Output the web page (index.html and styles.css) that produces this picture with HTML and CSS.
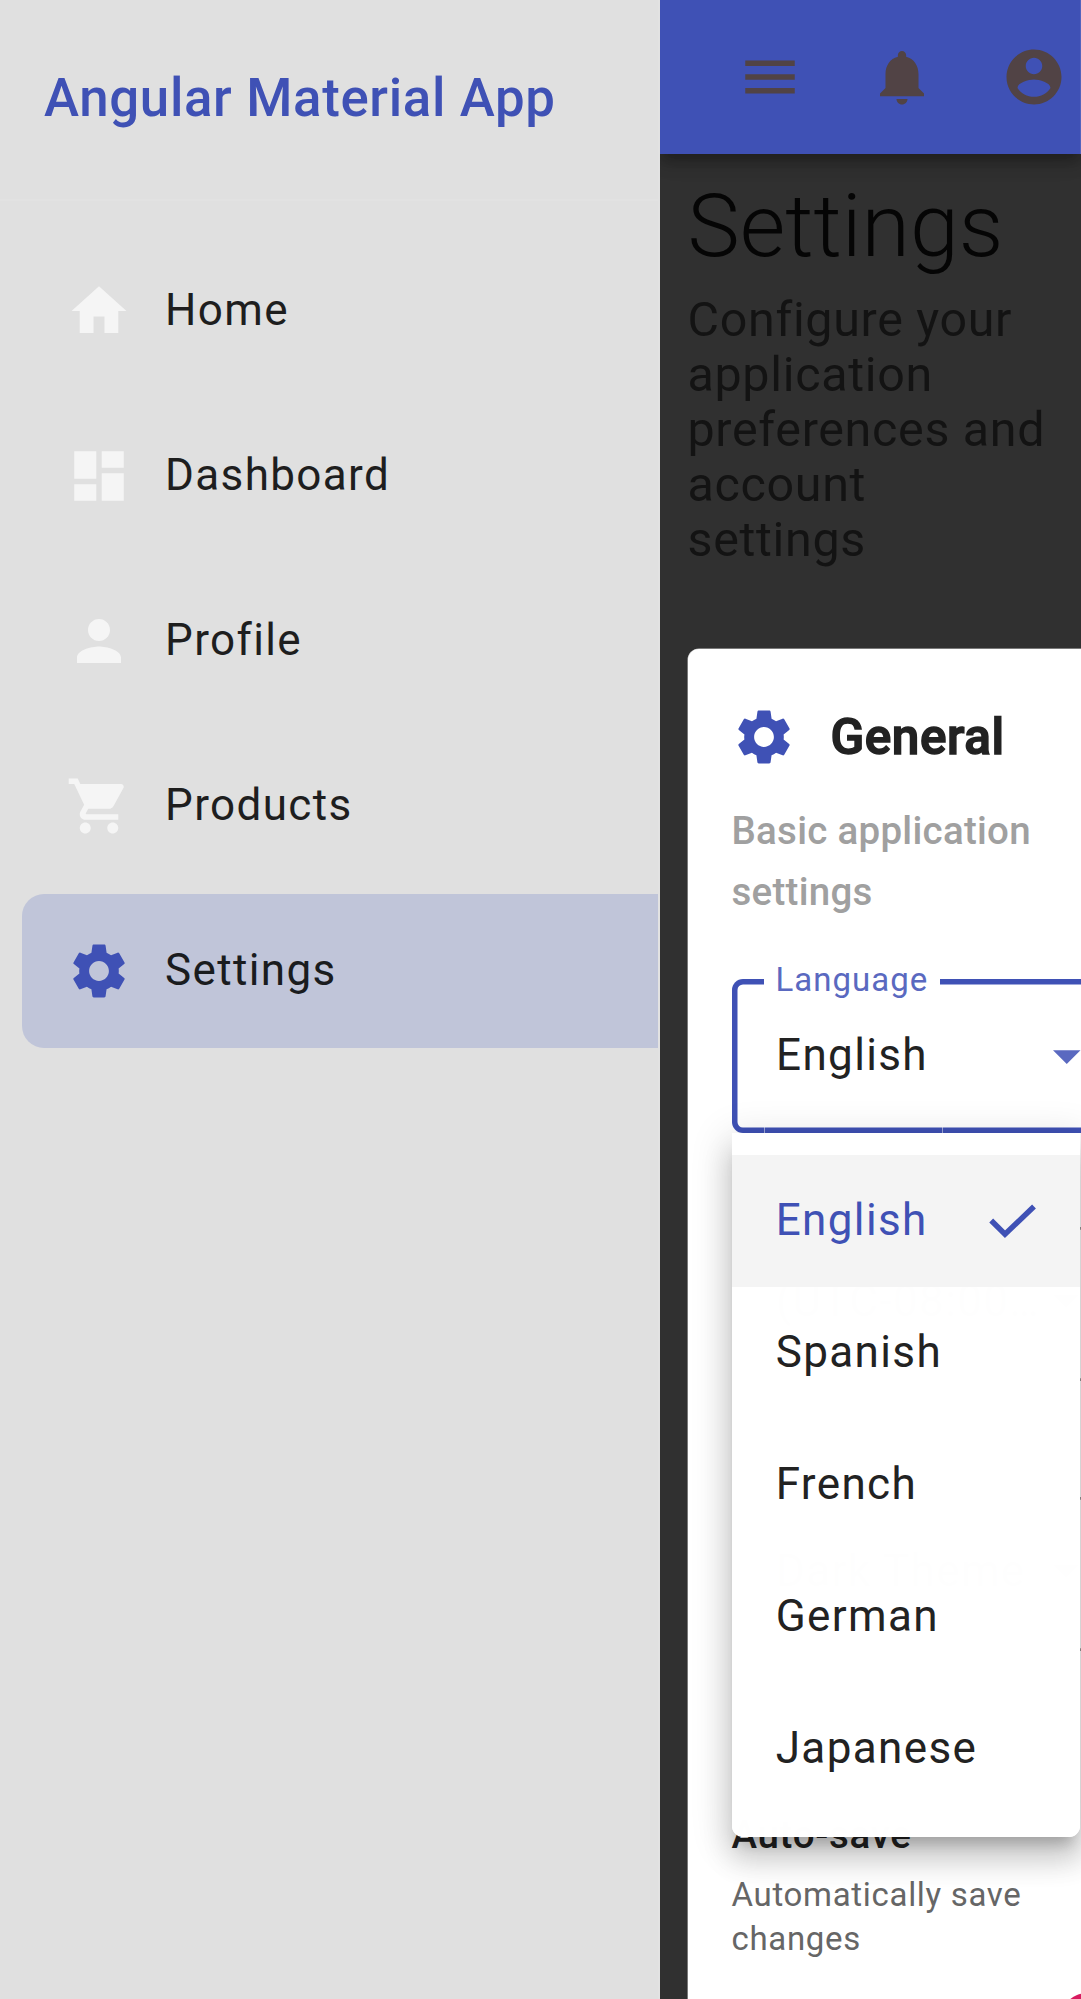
FILE: index.html
```html
<!DOCTYPE html>
<html lang="en">
<head>
<meta charset="utf-8">
<title>Angular Material App</title>
<link rel="stylesheet" href="styles.css">
</head>
<body>
<div class="app">
  <aside class="sidenav">
    <header class="sidenav-header">Angular Material App</header>
    <nav class="nav-list">
      <a class="nav-item"><svg class="icon" viewBox="0 0 24 24"><path d="M10 20v-6h4v6h5v-8h3L12 3 2 12h3v8z"/></svg><span>Home</span></a>
      <a class="nav-item"><svg class="icon" viewBox="0 0 24 24"><path d="M3 13h8V3H3v10zm0 8h8v-6H3v6zm10 0h8V11h-8v10zm0-18v6h8V3h-8z"/></svg><span>Dashboard</span></a>
      <a class="nav-item"><svg class="icon" viewBox="0 0 24 24"><path d="M12 12c2.21 0 4-1.79 4-4s-1.790-4-4-4-4 1.790-4 4 1.790 4 4 4zm0 2c-2.670 0-8 1.340-8 4v2h16v-2c0-2.660-5.330-4-8-4z"/></svg><span>Profile</span></a>
      <a class="nav-item"><svg class="icon" viewBox="0 0 24 24"><path d="M7 18c-1.100 0-1.990.9-1.990 2S5.900 22 7 22s2-.9 2-2-.9-2-2-2zM1 2v2h2l3.600 7.590-1.350 2.450c-.160.280-.250.610-.250.960 0 1.100.9 2 2 2h12v-2H7.420c-.140 0-.250-.110-.250-.250l.030-.120.900-1.630h7.450c.750 0 1.410-.410 1.750-1.030l3.580-6.490c.080-.140.120-.310.120-.480 0-.550-.450-1-1-1H5.210l-.940-2H1zm16 16c-1.100 0-1.990.9-1.990 2s.890 2 1.990 2 2-.9 2-2-.9-2-2-2z"/></svg><span>Products</span></a>
      <a class="nav-item active"><svg class="icon" viewBox="0 0 24 24"><path d="M19.140 12.940c.040-.3.060-.610.060-.940 0-.320-.020-.640-.070-.940l2.030-1.580c.180-.140.230-.410.120-.610l-1.920-3.320c-.120-.220-.370-.290-.590-.220l-2.390.960c-.5-.380-1.030-.7-1.620-.940l-.360-2.540c-.040-.240-.240-.410-.480-.410h-3.840c-.240 0-.430.170-.470.410l-.360 2.540c-.590.240-1.130.570-1.620.940l-2.390-.960c-.220-.080-.470 0-.590.220L2.740 8.870c-.120.210-.080.470.120.610l2.030 1.580c-.050.3-.090.630-.090.940s.020.640.070.940l-2.030 1.580c-.180.140-.230.410-.120.610l1.920 3.320c.120.220.370.290.590.220l2.390-.960c.5.380 1.030.7 1.620.940l.360 2.540c.050.240.240.410.480.410h3.840c.240 0 .440-.170.470-.410l.360-2.540c.590-.240 1.130-.560 1.620-.940l2.390.960c.220.080.470 0 .590-.220l1.920-3.320c.120-.220.070-.470-.120-.610l-2.010-1.580zM12 15.600c-1.980 0-3.600-1.620-3.600-3.600s1.620-3.600 3.600-3.600 3.600 1.620 3.600 3.600-1.620 3.600-3.600 3.600z"/></svg><span>Settings</span></a>
    </nav>
  </aside>

  <div class="main">
    <header class="toolbar">
      <button class="icon-button" aria-label="Menu"><svg class="icon" viewBox="0 0 24 24"><path d="M3 18h18v-2H3v2zm0-5h18v-2H3v2zm0-7v2h18V6H3z"/></svg></button>
      <button class="icon-button" aria-label="Notifications"><svg class="icon" viewBox="0 0 24 24"><path d="M12 22c1.100 0 2-.9 2-2h-4c0 1.100.890 2 2 2zm6-6v-5c0-3.070-1.640-5.640-4.500-6.320V4c0-.830-.670-1.500-1.500-1.500s-1.500.670-1.500 1.500v.680C7.630 5.360 6 7.920 6 11v5l-2 2v1h16v-1l-2-2z"/></svg></button>
      <button class="icon-button" aria-label="Account"><svg class="icon" viewBox="0 0 24 24"><path d="M12 2C6.480 2 2 6.480 2 12s4.480 10 10 10 10-4.480 10-10S17.520 2 12 2zm0 3c1.660 0 3 1.340 3 3s-1.340 3-3 3-3-1.340-3-3 1.340-3 3-3zm0 14.200c-2.500 0-4.710-1.280-6-3.220.030-1.990 4-3.080 6-3.080 1.990 0 5.970 1.090 6 3.080-1.290 1.940-3.500 3.220-6 3.220z"/></svg></button>
    </header>

    <main class="content">
      <h1 class="page-title">Settings</h1>
      <p class="page-subtitle">Configure your<br>application<br>preferences and<br>account<br>settings</p>

      <section class="card">
        <div class="card-header">
          <svg class="icon" viewBox="0 0 24 24"><path d="M19.140 12.940c.040-.3.060-.610.060-.940 0-.320-.020-.640-.070-.940l2.030-1.580c.180-.140.230-.410.120-.610l-1.920-3.320c-.120-.220-.370-.290-.590-.220l-2.390.960c-.5-.380-1.030-.7-1.620-.940l-.360-2.540c-.040-.240-.240-.410-.480-.410h-3.840c-.240 0-.430.170-.470.410l-.360 2.540c-.590.240-1.130.570-1.620.940l-2.390-.960c-.220-.080-.470 0-.590.220L2.740 8.870c-.120.210-.080.470.120.610l2.030 1.580c-.050.3-.090.630-.090.940s.020.640.070.940l-2.030 1.580c-.180.140-.230.410-.120.610l1.920 3.320c.120.220.370.290.590.220l2.390-.960c.5.380 1.030.7 1.620.940l.360 2.540c.050.240.240.410.480.410h3.840c.240 0 .440-.170.470-.410l.360-2.540c.590-.240 1.130-.560 1.620-.940l2.390.960c.220.080.470 0 .590-.220l1.920-3.320c.120-.220.070-.470-.120-.610l-2.010-1.580zM12 15.600c-1.980 0-3.600-1.620-3.600-3.600s1.620-3.600 3.600-3.600 3.600 1.620 3.600 3.600-1.620 3.600-3.600 3.600z"/></svg>
          <h2 class="card-title">General</h2>
        </div>
        <p class="card-subtitle">Basic application<br>settings</p>

        <div class="field focused">
          <span class="field-label">Language</span>
          <span class="field-value">English</span>
          <span class="field-arrow"></span>
          <div class="menu">
            <div class="option selected"><span>English</span><svg class="check" viewBox="0 0 48 36"><path d="M2.200 16.500 16 30.200 45 2.500"/></svg></div>
            <div class="option">Spanish</div>
            <div class="option">French</div>
            <div class="option">German</div>
            <div class="option">Japanese</div>
          </div>
        </div>
        <div class="field timezone">
          <span class="field-value">(UTC-08:00…</span>
          <span class="field-arrow"></span>
        </div>
        <div class="field theme">
          <span class="field-value">Dark Theme</span>
          <span class="field-arrow"></span>
        </div>

        <div class="setting">
          <div class="setting-text">
            <h3 class="setting-title">Auto-save</h3>
            <p class="setting-hint">Automatically save<br>changes</p>
          </div>
          <span class="toggle-thumb"></span>
        </div>
      </section>
    </main>
  </div>
</div>
</body>
</html>
```
FILE: styles.css
```css
* { box-sizing: border-box; }

html, body { height: 100%; }

body {
  margin: 0;
  overflow: hidden;
  background: #303030;
  font-family: Roboto, "Liberation Sans", sans-serif;
  font-size: 44px;
  letter-spacing: 1.375px;
}

h1, h2, h3, p { margin: 0; }

.app {
  display: flex;
  width: 1081px;
  height: 1999px;
  overflow: hidden;
}

.icon {
  flex: none;
  display: block;
  width: 66px;
  height: 66px;
  fill: currentColor;
}

/* Side navigation */
.sidenav {
  flex: none;
  width: 660px;
  background: #e0e0e0;
  border-right: 2.75px solid #e2e2e2;
}

.sidenav-header {
  height: 200.75px;
  padding: 0 44px;
  border-bottom: 2.75px solid #e2e2e2;
  color: #3f51b5;
  font-size: 52.8px;
  font-weight: 500;
  line-height: 196px;
  letter-spacing: 0.66px;
  white-space: nowrap;
}

.nav-list {
  display: flex;
  flex-direction: column;
  gap: 11px;
  padding: 33px 0 0 22px;
}

.nav-item {
  display: flex;
  align-items: center;
  gap: 33px;
  height: 154px;
  padding-left: 44px;
  border-radius: 22px 0 0 22px;
  color: #1e1e1e;
}

.nav-item span { padding-bottom: 2px; }
.nav-item .icon { color: #f5f5f5; }
.nav-item.active { background: #c0c5d9; color: #1a1c1e; }
.nav-item.active .icon { color: #3f51b5; }

/* Main area */
.main {
  flex: none;
  width: 421px;
  overflow: hidden;
  background: #303030;
}

.toolbar {
  position: relative;
  display: flex;
  height: 154px;
  padding-left: 44px;
  border-right: 1px solid #5463bd;
  background: #3f51b5;
  box-shadow: 0 5.5px 11px -2.75px rgba(0, 0, 0, .2), 0 11px 13.75px rgba(0, 0, 0, .14), 0 2.75px 27.5px rgba(0, 0, 0, .12);
}

.icon-button {
  flex: none;
  display: grid;
  place-items: center;
  width: 132px;
  padding: 0;
  border: 0;
  background: none;
  color: #514345;
}

.content { padding: 23px 27.5px 0; }

.page-title {
  height: 115px;
  color: #050505;
  font-size: 88px;
  font-weight: 300;
  line-height: 98px;
  letter-spacing: 0;
}

.page-subtitle {
  color: #131313;
  font-size: 48.4px;
  line-height: 55px;
  letter-spacing: 0.6875px;
  white-space: nowrap;
}

/* Settings card */
.card {
  width: 500px;
  height: 1500px;
  margin-top: 82px;
  padding: 44px;
  border-radius: 11px;
  background: #fff;
  box-shadow: 0 0 0 0.5px rgba(255, 255, 255, .7);
  color: #222;
}

.card-header {
  display: flex;
  align-items: center;
  gap: 34px;
  height: 88px;
  margin-left: -1px;
  color: #3f51b5;
}

.card-title {
  color: #222;
  font-size: 49.5px;
  font-weight: 500;
  letter-spacing: 0.55px;
  -webkit-text-stroke: 1.5px #222;
}

.card-subtitle {
  height: 198px;
  padding-top: 20px;
  color: #a0a0a0;
  font-size: 38.5px;
  font-weight: 500;
  line-height: 60.5px;
  letter-spacing: 0.275px;
}

.field {
  position: relative;
  display: flex;
  align-items: center;
  justify-content: space-between;
  width: 412px;
  height: 154px;
  padding: 0 63.5px 6px 44.5px;
  border-radius: 11px;
  box-shadow: inset 0 0 0 2.75px #999;
}

.field.focused {
  z-index: 1;
  padding: 0 63px 0 44.5px;
  box-shadow: inset 0 0 0 5.5px #3f51b5;
}

.focused .field-value { padding-bottom: 3px; }
.focused .field-arrow { margin-top: 2px; }

.field.focused::before {
  content: "";
  position: absolute;
  left: 32.5px;
  bottom: 0;
  width: 177px;
  height: 6px;
  border: solid rgba(255, 255, 255, .5);
  border-width: 0 1px;
}

.field-label {
  position: absolute;
  top: -18px;
  left: 32.5px;
  padding: 0 12px 0 11.5px;
  background: #fff;
  color: #5a69c0;
  font-size: 33px;
  line-height: 38px;
  letter-spacing: 1.03px;
}

.field-arrow {
  width: 27.5px;
  height: 13.75px;
  background: #5a69c0;
  clip-path: polygon(0 0, 100% 0, 50% 100%);
}

.timezone { margin-top: 94px; }
.theme { margin-top: 116px; }
.timezone .field-arrow, .theme .field-arrow { background: #757575; }

/* Open select menu */
.menu {
  position: absolute;
  top: 154px;
  left: 0;
  width: 348.5px;
  height: 704px;
  padding: 22px 0;
  border-radius: 0 0 11px 11px;
  background: rgba(255, 255, 255, .996);
  box-shadow: 0 13.75px 13.75px -8.25px rgba(0, 0, 0, .2), 0 22px 27.5px 2.75px rgba(0, 0, 0, .14), 0 8.25px 38.5px 5.5px rgba(0, 0, 0, .12);
}

.option {
  display: flex;
  align-items: center;
  justify-content: space-between;
  height: 132px;
  padding: 0 43.5px 2px 44.2px;
}

.option.selected { background: #f4f4f4; color: #3f51b5; }

.check {
  width: 48px;
  height: 36px;
  margin-top: 3px;
  fill: none;
  stroke: currentColor;
  stroke-width: 5.5;
}

/* Setting row with toggle */
.setting {
  display: flex;
  justify-content: space-between;
  margin-top: 152px;
}

.setting-title {
  height: 70px;
  font-size: 38.5px;
  font-weight: 500;
  line-height: 64px;
  letter-spacing: 0.6875px;
}

.setting-hint {
  color: #666;
  font-size: 33px;
  line-height: 44px;
  letter-spacing: 0.6875px;
  white-space: nowrap;
}

.toggle-thumb {
  flex: none;
  width: 55px;
  height: 55px;
  margin: 190px 29px 0 0;
  border-radius: 50%;
  background: #d81b60;
}
```
